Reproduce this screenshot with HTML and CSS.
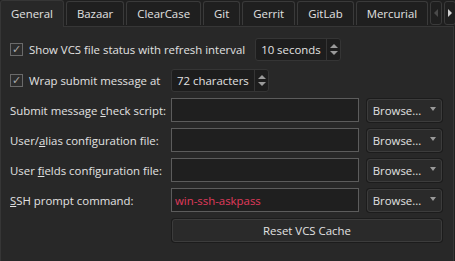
FILE: index.html
```html
<!DOCTYPE html>
<html lang="en">
<head>
  <meta charset="UTF-8" />
  <title>VCS settings</title>
  <link rel="stylesheet" href="styles.css">
</head>
<body>
  <div class="tabs">
    <div class="tab active">General</div>
    <div class="tab">Bazaar</div>
    <div class="tab">ClearCase</div>
    <div class="tab">Git</div>
    <div class="tab">Gerrit</div>
    <div class="tab">GitLab</div>
    <div class="tab">Mercurial</div>
    <div class="tab-scroll">
      <span class="scroll-btn"><i class="arrow-left"></i></span>
      <span class="scroll-btn"><i class="arrow-right"></i></span>
    </div>
  </div>

  <div class="pane">
    <div class="form">
      <!-- refresh interval -->
      <div class="check-row">
        <label class="check"><span class="box">&#10003;</span>Show VCS file status with refresh interval</label>
        <div class="spin spin-wide"><span class="spin-value">10 seconds</span><span class="spin-arrows"><i class="up"></i><i class="down"></i></span></div>
      </div>

      <div class="field-row">
        <label class="check"><span class="box">&#10003;</span>Wrap submit message at</label>
        <div class="spin spin-narrow"><span class="spin-value">72 characters</span><span class="spin-arrows"><i class="up"></i><i class="down"></i></span></div>
      </div>

      <div class="field-row">
        <span class="label">Submit message <u>c</u>heck script:</span>
        <div class="input"></div>
        <button class="browse">Browse... <i class="drop"></i></button>
      </div>

      <div class="field-row">
        <span class="label">User/<u>a</u>lias configuration file:</span>
        <div class="input"></div>
        <button class="browse">Browse... <i class="drop"></i></button>
      </div>

      <div class="field-row">
        <span class="label">User <u>f</u>ields configuration file:</span>
        <div class="input"></div>
        <button class="browse">Browse... <i class="drop"></i></button>
      </div>

      <div class="field-row">
        <span class="label"><u>S</u>SH prompt command:</span>
        <div class="input red">win-ssh-askpass</div>
        <button class="browse">Browse... <i class="drop"></i></button>
      </div>

      <div class="field-row">
        <span></span>
        <button class="reset">Reset VCS Cache</button>
      </div>
    </div>
  </div>
</body>
</html>
```

FILE: styles.css
```css
html, body {
  margin: 0;
  background: #1f1f1f;
}

body {
  width: 455px;
  height: 261px;
  overflow: hidden;
  font-family: 'Open Sans', 'Noto Sans', sans-serif;
  font-size: 11.4px;
  color: #e2e2e2;
}

.tabs {
  display: flex;
  align-items: flex-end;
  height: 26px;
  gap: 2px;
}

.tab {
  box-sizing: border-box;
  height: 24px;
  padding: 0 10px;
  display: flex;
  align-items: center;
  background: #1f1f1f;
  border: 1px solid #3a3a3a;
  border-bottom: none;
  border-radius: 3px 3px 0 0;
  margin-bottom: 1px;
}

.tab.active {
  height: 27px;
  margin-bottom: -1px;
  background: #282828;
  border-color: #363636;
  position: relative;
  z-index: 1;
  padding: 0 10px 1px 10px;
}

.tab-scroll {
  display: flex;
  gap: 2px;
  margin-left: auto;
  margin-right: 3px;
  margin-bottom: 1px;
}

.scroll-btn {
  box-sizing: border-box;
  width: 12px;
  height: 24px;
  border: 1px solid #3a3a3a;
  border-radius: 3px;
  display: flex;
  align-items: center;
  justify-content: center;
}

.arrow-left {
  border-right: 4px solid #4a4a4a;
  border-top: 4px solid transparent;
  border-bottom: 4px solid transparent;
}

.arrow-right {
  border-left: 4px solid #cfcfcf;
  border-top: 4px solid transparent;
  border-bottom: 4px solid transparent;
}

.pane {
  box-sizing: border-box;
  height: 236px;
  width: 454px;
  background: #282828;
  border: 1px solid #363636;
  padding: 10px 10px 0 9px;
}

.form {
  display: flex;
  flex-direction: column;
  gap: 6px;
}

.check-row {
  display: flex;
  align-items: center;
  gap: 10px;
  height: 24px;
  margin-bottom: 1px;
}

.check {
  display: flex;
  align-items: center;
  gap: 6px;
  white-space: nowrap;
}

.box {
  box-sizing: border-box;
  width: 13px;
  height: 13px;
  border: 1px solid #6a6a6a;
  background: #2c2c2c;
  color: #a8a8a8;
  font-size: 11px;
  line-height: 11px;
  text-align: center;
  font-family: 'DejaVu Sans', sans-serif;
}

.spin {
  box-sizing: border-box;
  height: 23px;
  display: flex;
  align-items: center;
  background: #1d1d1d;
  border: 1px solid #353535;
  border-radius: 3px;
  padding-left: 5px;
}

.spin-wide {
  width: 86px;
}

.spin-narrow {
  width: 98px;
}

.spin-value {
  flex: 1;
  white-space: nowrap;
}

.spin-arrows {
  box-sizing: border-box;
  width: 14px;
  height: 100%;
  border-left: 1px solid #353535;
  display: flex;
  flex-direction: column;
  align-items: center;
  justify-content: center;
  gap: 3px;
}

.up {
  border-bottom: 4px solid #9a9a9a;
  border-left: 4px solid transparent;
  border-right: 4px solid transparent;
}

.down {
  border-top: 4px solid #9a9a9a;
  border-left: 4px solid transparent;
  border-right: 4px solid transparent;
}

.field-row {
  display: grid;
  grid-template-columns: 155px 188px 77px;
  column-gap: 6px;
  align-items: center;
  height: 24px;
}

.label {
  white-space: nowrap;
}

.input {
  box-sizing: border-box;
  height: 24px;
  background: #1f1f1f;
  border: 1px solid #5c5c5c;
  padding-left: 3px;
  display: flex;
  align-items: center;
}

.input.red {
  color: #e03a5c;
}

button {
  font-family: inherit;
  font-size: 11.4px;
  color: #e2e2e2;
  background: #2a2a2a;
  border: 1px solid #3c3c3c;
  border-radius: 3px;
  box-shadow: 0 0 0 1px #1c1c1c;
  box-sizing: border-box;
  height: 23px;
  padding: 0;
}

.browse {
  margin-left: 2px;
  display: flex;
  align-items: center;
  justify-content: center;
  gap: 9px;
}

.drop {
  border-top: 4px solid #9a9a9a;
  border-left: 3px solid transparent;
  border-right: 3px solid transparent;
  margin-top: -2px;
}

.reset {
  grid-column: 2 / 4;
  margin-left: 1px;
}
```
